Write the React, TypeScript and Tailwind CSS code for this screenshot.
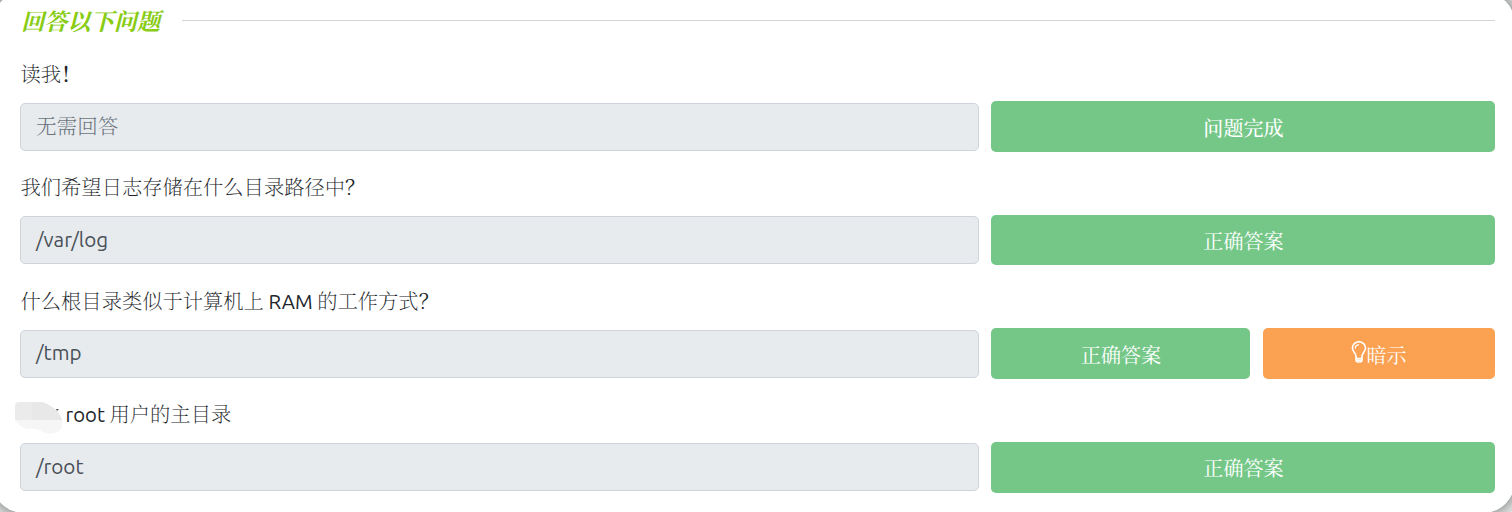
import type { ReactNode } from "react";

type Question = {
  label: ReactNode;
  value: string;
  placeholder?: boolean;
  action: string;
  emphasized?: boolean;
  hint?: string;
};

const questions: Question[] = [
  {
    label: (
      <>
        读我<span className="font-semibold">！</span>
      </>
    ),
    value: "无需回答",
    placeholder: true,
    action: "问题完成",
    emphasized: true,
  },
  {
    label: (
      <>
        我们希望日志存储在什么目录路径中<span className="font-normal">？</span>
      </>
    ),
    value: "/var/log",
    action: "正确答案",
  },
  {
    label: (
      <>
        什么根目录类似于计算机上<span className="font-normal"> RAM </span>的工作方式<span className="font-normal">？</span>
      </>
    ),
    value: "/tmp",
    action: "正确答案",
    hint: "暗示",
  },
  { label: <MaskedLabel />, value: "/root", action: "正确答案" },
];

function MaskedLabel() {
  return (
    <span className="flex items-center">
      <svg className="-ml-[6px] mr-[3px] h-8 w-12 shrink-0 translate-y-[2px]" viewBox="0 0 48 32" aria-hidden="true">
        <path d="M0 18V4Q0 0 4 0H26Q32 1 37 5Q44 9 47 18Z" fill="#ebebeb" />
        <path d="M17 0H26Q32 1 37 5Q44 9 47 18H17Z" fill="#e8e8e8" />
        <path d="M0 18H47V24Q46 29 40 31Q34 33 28 30Q22 26 12 27Q5 25 0 18Z" fill="#f6f6f6" />
        <path d="M41 7L44 7L42 9Z" fill="#4b4f56" />
      </svg>
      <span className="font-normal">root </span>用户的主目录
    </span>
  );
}

function BulbIcon() {
  return (
    <svg className="-ml-px h-[22px] w-[16px] -translate-y-[4px]" viewBox="0 0 15 22" fill="none" stroke="currentColor" strokeWidth="1.6" strokeLinecap="round" aria-hidden="true">
      <path d="M4.5 15C4.3 12 .9 10.5 .9 7A6.5 6.2 0 0 1 14 7C14 10.5 10.8 12 10.5 15V19Q10.5 21 8.5 21H6.5Q4.5 21 4.5 19Z" />
      <path d="M3.8 7.1C3.9 5 5.2 3.9 7.2 3.8" strokeWidth="1.2" />
      <path d="M4.7 17.5H10.3M4.8 19.3H10.2" />
    </svg>
  );
}

function QuestionRow({ label, value, placeholder, action, emphasized, hint }: Question) {
  return (
    <div className="h-[113.6px]">
      <div className="flex h-[41px] items-center whitespace-pre pl-[0.5px] text-[20.3px] font-extralight leading-none text-[#212529]">
        <div className="pt-[0.5px]">{label}</div>
      </div>
      <div className="mt-[6px] flex h-[51px] items-center gap-3">
        <div
          className={`flex h-[48px] w-[959px] shrink-0 items-center rounded-[5px] border border-[#ced4da] bg-[#e7ebee] px-[15px] text-[20.6px] leading-none ${placeholder ? "pt-px text-[20.3px] font-light text-[#6c757d]" : "text-[#495057]"}`}
        >
          {value}
        </div>
        <button
          className={`flex h-[50.5px] flex-1 items-center justify-center rounded-[5px] bg-[#74c787] pl-px text-[20.1px] leading-none text-white ${emphasized ? "pt-[5px] font-medium" : "pt-[4px] font-normal"}`}
        >
          {action}
        </button>
        {hint && (
          <button className="ml-px flex h-[50.5px] w-[232px] items-center justify-center rounded-[5px] bg-[#fba152] pt-[4px] text-[20px] leading-none text-white">
            <BulbIcon />
            {hint}
          </button>
        )}
      </div>
    </div>
  );
}

export default function App() {
  return (
    <div className="h-[512px] w-[1512px] overflow-hidden bg-[#e6e8e8] font-['Ubuntu','Noto_Sans','Noto_Serif_CJK_SC','Noto_Sans_CJK_SC',sans-serif]">
      <main className="-ml-2 -mt-2 h-[521px] w-[1523px] rounded-[32px] bg-white pl-[28px] pr-[20px] pt-2 shadow-[0_0_14px_2px_rgba(0,0,0,0.45)]">
        <header className="flex h-[41px] items-center">
          <h1 className="w-[162px] pl-px pt-[2px] text-[23.2px] font-bold italic leading-none text-[#88cc14]">回答以下问题</h1>
          <hr className="flex-1 border-[#d2d4d5]" />
        </header>
        <div className="mt-[13px]">
          {questions.map((question, index) => (
            <QuestionRow key={index} {...question} />
          ))}
        </div>
      </main>
    </div>
  );
}
